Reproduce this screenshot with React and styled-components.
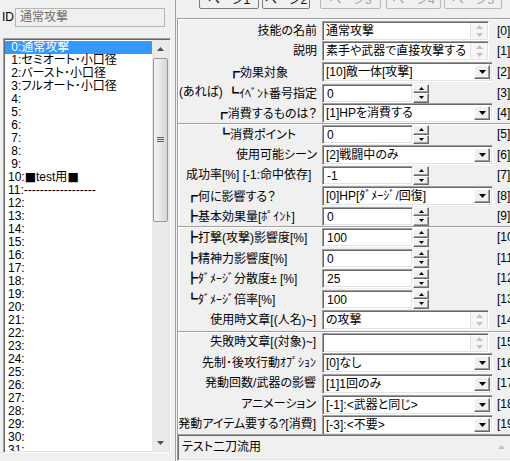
import React from 'react';
import styled, { createGlobalStyle, css } from 'styled-components';

const Global = createGlobalStyle`
  html, body { margin: 0; padding: 0; background: #f0f0f0; }
  body {
    font-family: "Liberation Sans", "Noto Sans CJK JP", sans-serif;
    font-size: 12px;
    color: #000;
  }
  #root { width: 510px; height: 461px; overflow: hidden; }
`;

const sunken = css`
  box-sizing: border-box;
  border: 1px solid;
  border-color: #a0a0a0 #ffffff #ffffff #a0a0a0;
  box-shadow: inset 1px 1px 0 #696969, inset -1px -1px 0 #e3e3e3;
`;

const raised = css`
  box-sizing: border-box;
  border: 1px solid;
  border-color: #ffffff #696969 #696969 #ffffff;
  box-shadow: inset -1px -1px 0 #a0a0a0;
  background: #f0f0f0;
`;

const Window = styled.div`
  display: flex;
  width: 510px;
  height: 461px;
  overflow: hidden;
  background: #f0f0f0;
  font-family: "Liberation Sans", "Noto Sans CJK JP", sans-serif;
  font-size: 12px;
  line-height: 13px;
  font-feature-settings: "palt";
`;

const Hw = styled.span`
  font-feature-settings: normal;
`;

const BoxGlyph = styled.span`
  font-family: "Noto Sans CJK JP", sans-serif;
  font-weight: 700;
  font-feature-settings: normal;
`;

const Square = styled.span`
  font-family: "DejaVu Sans", sans-serif;
  font-feature-settings: normal;
`;

function Txt({ children }) {
  const s = String(children ?? '');
  const parts = s.split(/([\uFF61-\uFF9F]+|[┏┗┣]|■)/);
  return parts.filter(Boolean).map((p, i) => {
    if (/^[\uFF61-\uFF9F]+$/.test(p)) return <Hw key={i}>{p}</Hw>;
    if (/^[┏┗┣]$/.test(p)) return <BoxGlyph key={i}>{p}</BoxGlyph>;
    if (p === '■') return <Square key={i}>{p}</Square>;
    return <React.Fragment key={i}>{p}</React.Fragment>;
  });
}

/* ---------- left side ---------- */
const LeftPanel = styled.div`
  width: 176px;
  flex: none;
  box-sizing: border-box;
  border-right: 1px solid #a0a0a0;
  display: flex;
  flex-direction: column;
  padding-top: 8px;
`;

const IdRow = styled.div`
  display: flex;
  align-items: center;
  height: 19px;
  padding-left: 2px;
`;

const IdLabel = styled.span`
  width: 13px;
`;

const IdField = styled.div`
  box-sizing: border-box;
  width: 150px;
  height: 19px;
  border: 1px solid #b5b5b5;
  background: #f0f0f0;
  color: #6d6d6d;
  padding: 2px 0 0 4px;
  white-space: nowrap;
`;

const ListBox = styled.div`
  ${sunken};
  margin: 11px 0 0 3px;
  width: 168px;
  height: 415px;
  padding: 1px;
  display: flex;
  background: #fff;
`;

const Items = styled.div`
  flex: 1;
  overflow: hidden;
  padding-top: 1px;
`;

const Item = styled.div`
  height: 13px;
  line-height: 13px;
  padding-left: 3px;
  white-space: pre;
  background: ${p => (p.$selected ? '#3399ff' : 'transparent')};
  color: ${p => (p.$selected ? '#fff' : '#000')};
`;

const VScroll = styled.div`
  width: 17px;
  flex: none;
  background: #eaeaea;
  display: flex;
  flex-direction: column;
`;

const ArrowBox = styled.div`
  height: 17px;
  flex: none;
  display: flex;
  align-items: center;
  justify-content: center;
`;

const Track = styled.div`
  flex: 1;
  padding-top: 1px;
`;

const Thumb = styled.div`
  box-sizing: border-box;
  margin: 0 1px;
  height: 164px;
  border: 1px solid #979797;
  border-radius: 2px;
  background: linear-gradient(to right, #f4f4f4, #e6e6e6 50%, #d6d6d6);
  display: flex;
  align-items: center;
  justify-content: center;
`;

/* ---------- right side ---------- */
const RightPanel = styled.div`
  flex: 1;
  min-width: 0;
  display: flex;
  flex-direction: column;
  overflow: hidden;
`;

const TabRow = styled.div`
  height: 18px;
  flex: none;
  display: flex;
  padding-left: 23px;
`;

const Tab = styled.div`
  box-sizing: border-box;
  width: ${p => p.$w}px;
  margin-left: ${p => p.$ml}px;
  margin-top: -12px;
  height: 21px;
  padding-top: 5px;
  border: 1px solid ${p => (p.$disabled ? '#b9b9b9' : '#7a7a7a')};
  border-radius: 2px;
  background: #f0f0f0;
  color: ${p => (p.$disabled ? '#a3a3a3' : '#000')};
  text-align: center;
  white-space: nowrap;
`;

const Section = styled.div`
  margin-left: 1px;
  border-top: 1px solid #a0a0a0;
  border-left: 1px solid #a0a0a0;
  box-shadow: inset 1px 1px 0 #ffffff;
  padding-top: ${p => p.$pt || 0}px;
  display: flex;
  flex-direction: column;
`;

const Row = styled.div`
  height: ${p => p.$h}px;
  display: flex;
  align-items: center;
`;

const Label = styled.div`
  box-sizing: border-box;
  width: 140px;
  flex: none;
  display: flex;
  justify-content: ${p => (p.$left ? 'flex-start' : 'flex-end')};
  padding-left: ${p => p.$pl ?? 8}px;
  padding-right: ${p => p.$pr ?? 1}px;
  white-space: nowrap;
`;

const Prefix = styled.span`
  margin-right: auto;
`;

const Cell = styled.div`
  width: 171px;
  margin-left: 4px;
  flex: none;
  display: flex;
  align-items: center;
`;

const Index = styled.div`
  margin-left: 4px;
  white-space: nowrap;
`;

const Memo = styled.div`
  ${sunken};
  width: 167px;
  height: 20px;
  background: #fff;
  display: flex;
  padding: 1px;
`;

const MemoText = styled.div`
  flex: 1;
  padding: 2px 0 0 2px;
  white-space: nowrap;
  overflow: hidden;
`;

const MiniScroll = styled.div`
  width: 17px;
  flex: none;
  background: #f6f6f6;
  border-left: 1px solid #e2e2e2;
  display: flex;
  flex-direction: column;
  justify-content: space-between;
  align-items: center;
  padding: 2px 0;
  box-sizing: border-box;
`;

const Combo = styled.div`
  ${sunken};
  width: 171px;
  height: 20px;
  background: #fff;
  display: flex;
  padding: 2px;
`;

const ComboText = styled.div`
  flex: 1;
  padding: 1px 0 0 1px;
  white-space: nowrap;
  overflow: hidden;
`;

const DropBtn = styled.div`
  ${raised};
  width: 16px;
  flex: none;
  display: flex;
  align-items: center;
  justify-content: center;
`;

const SpinField = styled.div`
  ${sunken};
  width: 91px;
  height: 19px;
  background: #fff;
  padding: 3px 0 0 4px;
  white-space: nowrap;
`;

const SpinBtns = styled.div`
  width: 16px;
  height: 19px;
  display: flex;
  flex-direction: column;
`;

const SpinBtn = styled.div`
  ${raised};
  flex: 1;
  display: flex;
  align-items: center;
  justify-content: center;
`;

const DescBox = styled.div`
  ${sunken};
  margin-left: 1px;
  width: 336px;
  flex: 1;
  background: #f0f0f0;
  display: flex;
  padding: 2px;
`;

const DescText = styled.div`
  flex: 1;
  padding: 4px 0 0 2px;
  white-space: nowrap;
`;

const DescScroll = styled.div`
  width: 17px;
  flex: none;
  display: flex;
  justify-content: center;
  padding-top: 8px;
`;

const Tri = ({ up, w = 7, h = 4, color = '#000' }) => (
  <svg width={w} height={h} viewBox={`0 0 ${w} ${h}`} style={{ display: 'block' }}>
    <polygon
      points={up ? `0,${h} ${w},${h} ${w / 2},0` : `0,0 ${w},0 ${w / 2},${h}`}
      fill={color}
    />
  </svg>
);

const Grip = () => (
  <svg width="7" height="6" viewBox="0 0 7 6" style={{ display: 'block' }}>
    <rect x="0" y="0" width="7" height="1" fill="#606060" />
    <rect x="0" y="2" width="7" height="1" fill="#606060" />
    <rect x="0" y="4" width="7" height="1" fill="#606060" />
  </svg>
);

const listNames = {
  0: '通常攻撃',
  1: 'セミオート･小口径',
  2: 'バースト･小口径',
  3: 'フルオート･小口径',
  10: '■test用■',
  11: '------------------',
};

const listItems = Array.from({ length: 32 }, (_, i) => {
  const num = i < 10 ? ` ${i}` : `${i}`;
  return `${num}:${listNames[i] || ''}`;
});

const tabs = [
  { label: 'ページ1', w: 60, ml: 0 },
  { label: 'ページ2', w: 48, ml: 3 },
  { label: 'ページ3', w: 61, ml: 10, disabled: true },
  { label: 'ページ4', w: 55, ml: 5, disabled: true },
  { label: 'ページ5', w: 58, ml: 3, disabled: true },
];

const sections = [
  {
    pt: 2,
    rows: [
      { h: 20, label: '技能の名前', type: 'memo', value: '通常攻撃' },
      { h: 20, label: '説明', type: 'memo', value: '素手や武器で直接攻撃する' },
      { h: 22, label: '┏効果対象', pr: 30, type: 'combo', value: '[10]敵一体[攻撃]' },
      { h: 20, prefix: '(あれば)', pl: 1, label: '┗ｲﾍﾞﾝﾄ番号指定', type: 'spin', value: '0' },
      { h: 20, label: '┏消費するものは？', type: 'combo', value: '[1]HPを消費する' },
    ],
  },
  {
    rows: [
      { h: 21, label: '┗消費ポイント', pr: 22, type: 'spin', value: '0' },
      { h: 20, label: '使用可能シーン', type: 'combo', value: '[2]戦闘中のみ' },
      { h: 21, label: '成功率[%] [-1:命中依存]', left: true, type: 'spin', value: '-1' },
      { h: 20, label: '┏何に影響する？', left: true, type: 'combo', value: '[0]HP[ﾀﾞﾒｰｼﾞ/回復]' },
      { h: 20, label: '┣基本効果量[ﾎﾟｲﾝﾄ]', left: true, type: 'spin', value: '0' },
    ],
  },
  {
    rows: [
      { h: 21, label: '┣打撃(攻撃)影響度[%]', left: true, type: 'spin', value: '100' },
      { h: 20, label: '┣精神力影響度[%]', left: true, type: 'spin', value: '0' },
      { h: 21, label: '┣ﾀﾞﾒｰｼﾞ分散度± [%]', left: true, type: 'spin', value: '25' },
      { h: 20, label: '┗ﾀﾞﾒｰｼﾞ倍率[%]', left: true, type: 'spin', value: '100' },
      { h: 22, label: '使用時文章[(人名)~]', pr: 2, type: 'memo', value: 'の攻撃' },
    ],
  },
  {
    rows: [
      { h: 21, label: '失敗時文章[(対象)~]', pr: 2, type: 'memo', value: '' },
      { h: 20, label: '先制･後攻行動ｵﾌﾟｼｮﾝ', pr: 2, type: 'combo', value: '[0]なし' },
      { h: 21, label: '発動回数/武器の影響', pr: 2, type: 'combo', value: '[1]1回のみ' },
      { h: 21, label: 'アニメーション', pr: 2, type: 'combo', value: '[-1]:<武器と同じ>' },
      { h: 19, label: '発動アイテム要する?[消費]', pr: 2, type: 'combo', value: '[-3]:<不要>' },
    ],
  },
];

function Control({ type, value }) {
  if (type === 'memo') {
    return (
      <Memo>
        <MemoText>{value}</MemoText>
        <MiniScroll>
          <Tri up w={7} h={4} color="#c2c2c2" />
          <Tri w={7} h={4} color="#c2c2c2" />
        </MiniScroll>
      </Memo>
    );
  }
  if (type === 'combo') {
    return (
      <Combo>
        <ComboText>
          <Txt>{value}</Txt>
        </ComboText>
        <DropBtn>
          <Tri w={7} h={4} />
        </DropBtn>
      </Combo>
    );
  }
  return (
    <>
      <SpinField>{value}</SpinField>
      <SpinBtns>
        <SpinBtn>
          <Tri up w={5} h={3} />
        </SpinBtn>
        <SpinBtn>
          <Tri w={5} h={3} />
        </SpinBtn>
      </SpinBtns>
    </>
  );
}

export default function App() {
  let idx = 0;
  return (
    <>
      <Global />
      <Window>
        <LeftPanel>
          <IdRow>
            <IdLabel>ID</IdLabel>
            <IdField>通常攻撃</IdField>
          </IdRow>
          <ListBox>
            <Items>
              {listItems.map((t, i) => (
                <Item key={i} $selected={i === 0}>
                  <Txt>{t}</Txt>
                </Item>
              ))}
            </Items>
            <VScroll>
              <ArrowBox>
                <Tri up w={7} h={4} color="#505050" />
              </ArrowBox>
              <Track>
                <Thumb>
                  <Grip />
                </Thumb>
              </Track>
              <ArrowBox>
                <Tri w={7} h={4} color="#505050" />
              </ArrowBox>
            </VScroll>
          </ListBox>
        </LeftPanel>
        <RightPanel>
          <TabRow>
            {tabs.map(t => (
              <Tab key={t.label} $w={t.w} $ml={t.ml} $disabled={t.disabled}>
                {t.label}
              </Tab>
            ))}
          </TabRow>
          {sections.map((s, si) => (
            <Section key={si} $pt={s.pt}>
              {s.rows.map(r => {
                const n = idx++;
                return (
                  <Row key={n} $h={r.h}>
                    <Label $left={r.left} $pr={r.pr} $pl={r.pl}>
                      {r.prefix && <Prefix>{r.prefix}</Prefix>}
                      <span>
                        <Txt>{r.label}</Txt>
                      </span>
                    </Label>
                    <Cell>
                      <Control type={r.type} value={r.value} />
                    </Cell>
                    <Index>[{n}]</Index>
                  </Row>
                );
              })}
            </Section>
          ))}
          <DescBox>
            <DescText>テスト二刀流用</DescText>
            <DescScroll>
              <Tri up w={7} h={4} color="#c2c2c2" />
            </DescScroll>
          </DescBox>
        </RightPanel>
      </Window>
    </>
  );
}
